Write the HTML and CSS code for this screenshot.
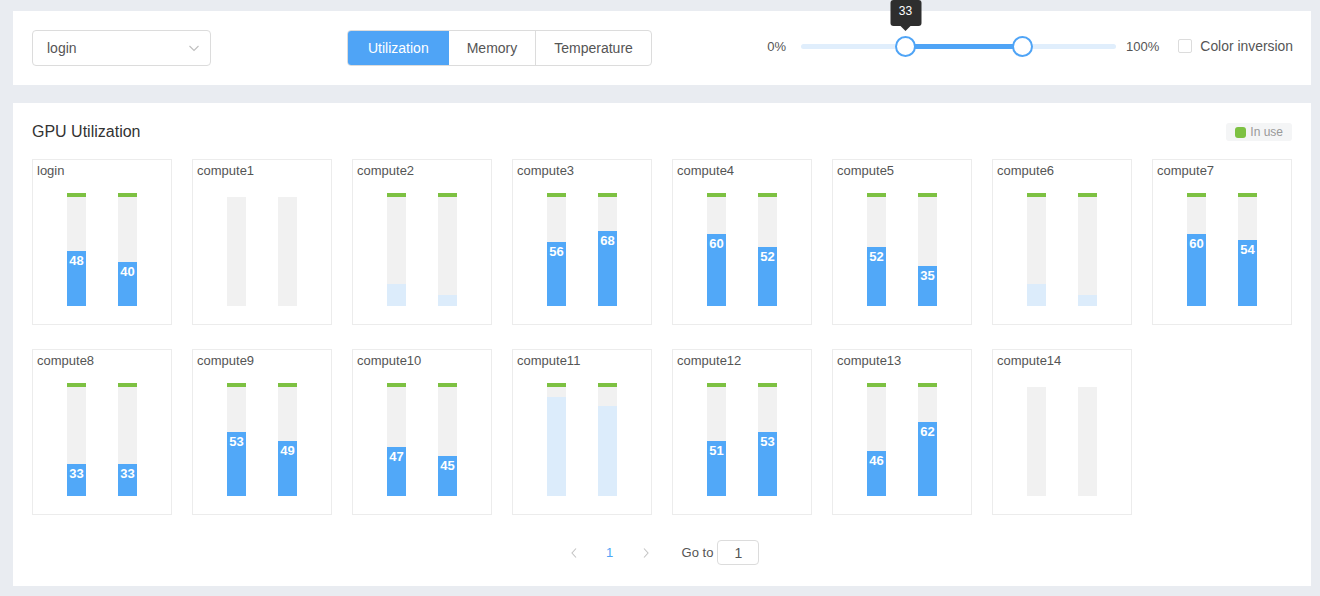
FILE: index.html
```html
<!DOCTYPE html>
<html>
<head>
<meta charset="utf-8">
<title>GPU Utilization</title>
<link rel="stylesheet" href="styles.css">
</head>
<body>
<div class="page">
  <div class="panel toolbar">
    <div class="select">
      <span class="select-value">login</span>
      <svg class="select-arrow" width="12" height="12" viewBox="0 0 12 12"><path d="M1.5 4 L6 8.5 L10.5 4" fill="none" stroke="#bfbfbf" stroke-width="1.1"/></svg>
    </div>
    <div class="tabs">
      <div class="tab active">Utilization</div>
      <div class="tab">Memory</div>
      <div class="tab">Temperature</div>
    </div>
    <div class="range-group">
      <span class="range-label">0%</span>
      <div class="slider">
        <div class="slider-rail"></div>
        <div class="slider-track" style="left: 33%; width: 37%;"></div>
        <div class="slider-handle" style="left: 33%;">
          <div class="tooltip">33</div>
        </div>
        <div class="slider-handle" style="left: 70%;"></div>
      </div>
      <span class="range-label right">100%</span>
      <span class="checkbox"></span>
      <span class="checkbox-label">Color inversion</span>
    </div>
  </div>

  <div class="panel content">
    <div class="content-header">
      <h2 class="title">GPU Utilization</h2>
      <div class="legend"><span class="legend-dot"></span><span class="legend-text">In use</span></div>
    </div>
    <div class="grid">
      <div class="card"><div class="card-name">login</div><div class="bars">
        <div class="bar"><div class="cap on"></div><div class="body"><div class="fill" style="height:55px">48</div></div></div>
        <div class="bar"><div class="cap on"></div><div class="body"><div class="fill" style="height:44px">40</div></div></div>
      </div></div>
      <div class="card"><div class="card-name">compute1</div><div class="bars">
        <div class="bar"><div class="cap"></div><div class="body"></div></div>
        <div class="bar"><div class="cap"></div><div class="body"></div></div>
      </div></div>
      <div class="card"><div class="card-name">compute2</div><div class="bars">
        <div class="bar"><div class="cap on"></div><div class="body"><div class="fill light" style="height:22px"></div></div></div>
        <div class="bar"><div class="cap on"></div><div class="body"><div class="fill light" style="height:11px"></div></div></div>
      </div></div>
      <div class="card"><div class="card-name">compute3</div><div class="bars">
        <div class="bar"><div class="cap on"></div><div class="body"><div class="fill" style="height:64px">56</div></div></div>
        <div class="bar"><div class="cap on"></div><div class="body"><div class="fill" style="height:75px">68</div></div></div>
      </div></div>
      <div class="card"><div class="card-name">compute4</div><div class="bars">
        <div class="bar"><div class="cap on"></div><div class="body"><div class="fill" style="height:72px">60</div></div></div>
        <div class="bar"><div class="cap on"></div><div class="body"><div class="fill" style="height:59px">52</div></div></div>
      </div></div>
      <div class="card"><div class="card-name">compute5</div><div class="bars">
        <div class="bar"><div class="cap on"></div><div class="body"><div class="fill" style="height:59px">52</div></div></div>
        <div class="bar"><div class="cap on"></div><div class="body"><div class="fill" style="height:40px">35</div></div></div>
      </div></div>
      <div class="card"><div class="card-name">compute6</div><div class="bars">
        <div class="bar"><div class="cap on"></div><div class="body"><div class="fill light" style="height:22px"></div></div></div>
        <div class="bar"><div class="cap on"></div><div class="body"><div class="fill light" style="height:11px"></div></div></div>
      </div></div>
      <div class="card"><div class="card-name">compute7</div><div class="bars">
        <div class="bar"><div class="cap on"></div><div class="body"><div class="fill" style="height:72px">60</div></div></div>
        <div class="bar"><div class="cap on"></div><div class="body"><div class="fill" style="height:66px">54</div></div></div>
      </div></div>

      <div class="card"><div class="card-name">compute8</div><div class="bars">
        <div class="bar"><div class="cap on"></div><div class="body"><div class="fill" style="height:32px">33</div></div></div>
        <div class="bar"><div class="cap on"></div><div class="body"><div class="fill" style="height:32px">33</div></div></div>
      </div></div>
      <div class="card"><div class="card-name">compute9</div><div class="bars">
        <div class="bar"><div class="cap on"></div><div class="body"><div class="fill" style="height:64px">53</div></div></div>
        <div class="bar"><div class="cap on"></div><div class="body"><div class="fill" style="height:55px">49</div></div></div>
      </div></div>
      <div class="card"><div class="card-name">compute10</div><div class="bars">
        <div class="bar"><div class="cap on"></div><div class="body"><div class="fill" style="height:49px">47</div></div></div>
        <div class="bar"><div class="cap on"></div><div class="body"><div class="fill" style="height:40px">45</div></div></div>
      </div></div>
      <div class="card"><div class="card-name">compute11</div><div class="bars">
        <div class="bar"><div class="cap on"></div><div class="body"><div class="fill light" style="height:99px"></div></div></div>
        <div class="bar"><div class="cap on"></div><div class="body"><div class="fill light" style="height:90px"></div></div></div>
      </div></div>
      <div class="card"><div class="card-name">compute12</div><div class="bars">
        <div class="bar"><div class="cap on"></div><div class="body"><div class="fill" style="height:55px">51</div></div></div>
        <div class="bar"><div class="cap on"></div><div class="body"><div class="fill" style="height:64px">53</div></div></div>
      </div></div>
      <div class="card"><div class="card-name">compute13</div><div class="bars">
        <div class="bar"><div class="cap on"></div><div class="body"><div class="fill" style="height:45px">46</div></div></div>
        <div class="bar"><div class="cap on"></div><div class="body"><div class="fill" style="height:74px">62</div></div></div>
      </div></div>
      <div class="card"><div class="card-name">compute14</div><div class="bars">
        <div class="bar"><div class="cap"></div><div class="body"></div></div>
        <div class="bar"><div class="cap"></div><div class="body"></div></div>
      </div></div>
    </div>

    <div class="pagination">
      <span class="page-btn arrow"><svg width="8" height="12" viewBox="0 0 8 12"><path d="M6 1.5 L2 6 L6 10.5" fill="none" stroke="#c4c4c4" stroke-width="1.1"/></svg></span>
      <span class="page-btn current">1</span>
      <span class="page-btn arrow"><svg width="8" height="12" viewBox="0 0 8 12"><path d="M2 1.5 L6 6 L2 10.5" fill="none" stroke="#c4c4c4" stroke-width="1.1"/></svg></span>
      <span class="goto">Go to</span>
      <span class="goto-input">1</span>
    </div>
  </div>
</div>
</body>
</html>
```

FILE: styles.css
```css
* { box-sizing: border-box; }

html, body {
  margin: 0;
  padding: 0;
  background: #e9ecf1;
  font-family: "Liberation Sans", Arial, sans-serif;
  color: #555;
}

.page {
  width: 1320px;
  padding: 11px 9px 10px 13px;
}

.panel {
  background: #fff;
}

/* ---------- toolbar ---------- */
.toolbar {
  height: 74px;
  padding: 0 18px 0 19px;
  display: flex;
  align-items: center;
}

.select {
  width: 179px;
  height: 36px;
  border: 1px solid #dcdcdc;
  border-radius: 4px;
  display: flex;
  align-items: center;
  justify-content: space-between;
  padding: 0 10px 0 14px;
  font-size: 14px;
  color: #555;
}

.select-arrow { display: block; }

.tabs {
  margin-left: 136px;
  display: flex;
  height: 36px;
  border: 1px solid #dcdcdc;
  border-radius: 4px;
  overflow: hidden;
}

.tab {
  display: flex;
  align-items: center;
  justify-content: center;
  padding: 0 18px;
  font-size: 14px;
  color: #555;
  border-left: 1px solid #dcdcdc;
}

.tab:first-child { border-left: none; }

.tab.active {
  background: #4fa4f6;
  color: #fff;
  padding: 0 19px 0 20px;
}

.tab.active + .tab { border-left-color: #4fa4f6; }

.range-group {
  margin-left: auto;
  margin-bottom: 4px;
  display: flex;
  align-items: center;
  font-size: 13px;
  color: #555;
}

.range-label { margin-right: 15px; }
.range-label.right { margin-left: 10px; margin-right: 0; }

.slider {
  position: relative;
  width: 315px;
  height: 21px;
}

.slider-rail {
  position: absolute;
  left: 0;
  right: 0;
  top: 8px;
  height: 5px;
  border-radius: 3px;
  background: #e0eefc;
}

.slider-track {
  position: absolute;
  top: 8px;
  height: 5px;
  background: #4fa4f6;
}

.slider-handle {
  position: absolute;
  top: 0;
  width: 21px;
  height: 21px;
  margin-left: -10px;
  border: 2px solid #4fa4f6;
  border-radius: 50%;
  background: #fff;
}

.tooltip {
  position: absolute;
  left: 50%;
  bottom: 29px;
  transform: translateX(-50%);
  width: 31px;
  height: 26px;
  line-height: 23px;
  border-radius: 3px;
  background: #2e2e2e;
  color: #fff;
  font-size: 12px;
  text-align: center;
}

.tooltip::after {
  content: "";
  position: absolute;
  left: 50%;
  bottom: -5px;
  margin-left: -5px;
  border-left: 5px solid transparent;
  border-right: 5px solid transparent;
  border-top: 5px solid #2e2e2e;
}

.checkbox {
  margin-left: 19px;
  width: 14px;
  height: 14px;
  border: 1px solid #dcdcdc;
  border-radius: 2px;
  background: #fff;
}

.checkbox-label {
  margin-left: 8px;
  font-size: 13.9px;
  color: #555;
}

/* ---------- content ---------- */
.content {
  margin-top: 18px;
  padding: 19px 19px 21px 19px;
}

.content-header {
  display: flex;
  align-items: center;
  justify-content: space-between;
  height: 20px;
}

.title {
  margin: 0;
  font-size: 16px;
  font-weight: normal;
  line-height: 20px;
  color: #333;
}

.legend {
  display: flex;
  align-items: center;
  height: 18px;
  padding: 0 9px 0 9px;
  background: #f4f5f6;
  border-radius: 3px;
}

.legend-dot {
  width: 11px;
  height: 11px;
  border-radius: 3px;
  background: #7dc142;
}

.legend-text {
  margin-left: 4px;
  font-size: 12px;
  color: #999;
}

.grid {
  margin-top: 17px;
  display: grid;
  grid-template-columns: repeat(8, 140px);
  column-gap: 20px;
  row-gap: 24px;
}

.card {
  width: 140px;
  height: 166px;
  border: 1px solid #ececec;
}

.card-name {
  padding: 3px 4px 0;
  font-size: 13px;
  line-height: 16px;
  color: #555;
}

.bars {
  margin-top: 14px;
  display: flex;
  justify-content: center;
  gap: 32px;
}

.bar {
  width: 19px;
  display: flex;
  flex-direction: column;
}

.cap { height: 4px; }
.cap.on { background: #7dc142; }

.body {
  height: 109px;
  background: #f1f1f1;
  display: flex;
  flex-direction: column;
  justify-content: flex-end;
}

.fill {
  background: #51a8f8;
  color: #fff;
  font-size: 13px;
  font-weight: bold;
  line-height: 15px;
  padding-top: 2px;
  text-align: center;
  overflow: hidden;
}

.fill.light { background: #dcecfb; }

/* ---------- pagination ---------- */
.pagination {
  margin-top: 25px;
  display: flex;
  align-items: center;
  justify-content: center;
  padding-right: 9px;
  height: 25px;
  font-size: 13px;
}

.page-btn {
  width: 28px;
  height: 25px;
  margin: 0 4px;
  display: flex;
  align-items: center;
  justify-content: center;
  color: #555;
}

.page-btn.current { color: #4fa4f6; }

.goto {
  margin-left: 18px;
  color: #555;
}

.goto-input {
  margin-left: 4px;
  width: 42px;
  height: 25px;
  border: 1px solid #dcdcdc;
  border-radius: 4px;
  display: flex;
  align-items: center;
  justify-content: center;
  font-size: 14px;
  color: #555;
}
```
